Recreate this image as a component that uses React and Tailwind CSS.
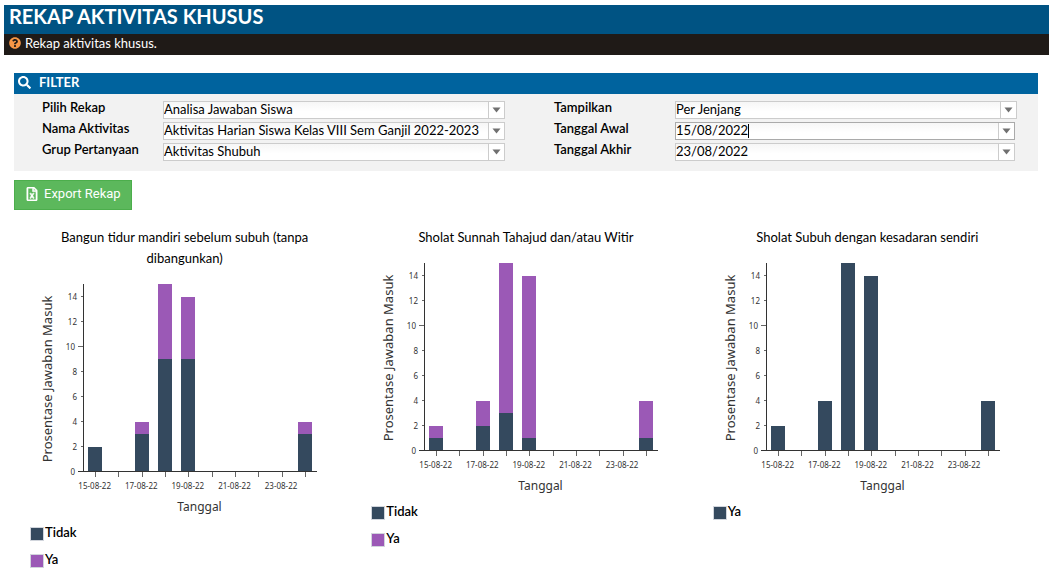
import React, { useState } from 'react';
import { FaQuestionCircle, FaRegFileExcel, FaSearch } from 'react-icons/fa';

const COLORS = { Tidak: '#34495e', Ya: '#9b59b6' };

const DATES = [
    '15-08-22', '16-08-22', '17-08-22', '18-08-22', '19-08-22',
    '20-08-22', '21-08-22', '22-08-22', '23-08-22', '24-08-22',
];

const CHARTS = [
    {
        title: 'Bangun tidur mandiri sebelum subuh (tanpa dibangunkan)',
        series: [
            { name: 'Tidak', values: [2, 0, 3, 9, 9, 0, 0, 0, 0, 3] },
            { name: 'Ya', values: [0, 0, 1, 6, 5, 0, 0, 0, 0, 1] },
        ],
    },
    {
        title: 'Sholat Sunnah Tahajud dan/atau Witir',
        series: [
            { name: 'Tidak', values: [1, 0, 2, 3, 1, 0, 0, 0, 0, 1] },
            { name: 'Ya', values: [1, 0, 2, 12, 13, 0, 0, 0, 0, 3] },
        ],
    },
    {
        title: 'Sholat Subuh dengan kesadaran sendiri',
        // only one answer came in, it takes the first color
        series: [{ name: 'Ya', color: '#34495e', values: [2, 0, 4, 15, 14, 0, 0, 0, 0, 4] }],
    },
];

// Plot area inside the svg
const LEFT = 55;
const BOTTOM = 203;
const PLOT_WIDTH = 233;
const PLOT_HEIGHT = 188;
const MAX = 15;

function StackedBarChart({ series }) {
    const band = PLOT_WIDTH / DATES.length;
    const y = (value) => Math.round(BOTTOM - (value / MAX) * PLOT_HEIGHT);

    return (
        <svg width="300" height="250" className="block font-['Noto_Sans',sans-serif]" fill="#333">
            {/* Bars */}
            {DATES.map((date, i) => {
                let total = 0;
                return series.map((s) => {
                    const from = total;
                    total += s.values[i];
                    if (!s.values[i]) return null;
                    return (
                        <rect
                            key={date + s.name}
                            x={Math.round(LEFT + band * i + 4)}
                            y={y(total)}
                            width="14"
                            height={y(from) - y(total)}
                            fill={s.color || COLORS[s.name]}
                            shapeRendering="crispEdges"
                        />
                    );
                });
            })}

            {/* Axes */}
            <g fill="none" stroke="#333" shapeRendering="crispEdges">
                <line x1={LEFT - 0.5} y1={BOTTOM - PLOT_HEIGHT} x2={LEFT - 0.5} y2={BOTTOM} />
                <line x1={LEFT - 6} y1={BOTTOM - 0.5} x2={LEFT + PLOT_WIDTH} y2={BOTTOM - 0.5} />
            </g>
            <g fill="none" stroke="#666" shapeRendering="crispEdges">
                {[2, 4, 6, 8, 10, 12, 14].map((v) => (
                    <line key={v} x1={LEFT - (v % 10 ? 3 : 6)} y1={y(v) - 0.5} x2={LEFT - 1} y2={y(v) - 0.5} />
                ))}
                {DATES.map((date, i) => {
                    const x = Math.floor(LEFT + band * (i + 0.5)) + 0.5;
                    return <line key={date} x1={x} y1={BOTTOM} x2={x} y2={BOTTOM + 5} />;
                })}
            </g>

            {/* Labels */}
            <g className="text-[8px]">
                {[0, 2, 4, 6, 8, 10, 12, 14].map((v) => (
                    <text key={v} x={LEFT - (v % 10 ? 7 : 9)} y={y(v) + 3} textAnchor="end">{v}</text>
                ))}
                {DATES.map((date, i) => i % 2 === 0 && (
                    <text key={date} x={LEFT + band * (i + 0.5) - 1} y={BOTTOM + 17} textAnchor="middle">{date}</text>
                ))}
            </g>
            <text x={LEFT + PLOT_WIDTH / 2 - 1} y={BOTTOM + 39} textAnchor="middle" className="text-[12px]">Tanggal</text>
            <text transform={`translate(23 ${BOTTOM - 93}) rotate(-90)`} textAnchor="middle" className="text-[13px]">
                Prosentase Jawaban Masuk
            </text>
        </svg>
    );
}

function ChartCard({ title, series }) {
    return (
        <article className="px-[15px]">
            <h2 className="text-center text-[13px] leading-[21px]">{title}</h2>
            <StackedBarChart series={series} />
            <ul className="pl-px text-[13px] font-semibold">
                {series.map((s) => (
                    <li key={s.name} className="flex h-[27px] items-center">
                        <span
                            className="mt-[2px] mr-px h-[14px] w-[14px] border border-gray-300"
                            style={{ backgroundColor: s.color || COLORS[s.name] }}
                        />
                        {s.name}
                    </li>
                ))}
            </ul>
        </article>
    );
}

function Arrow() {
    return (
        <svg width="9" height="6" viewBox="0 0 9 6" fill="#707070">
            <path d="M0.5 0.5h8L4.5 5.5z" />
        </svg>
    );
}

function Field({ id, label, children }) {
    return (
        <div className="flex h-[21px]">
            <label htmlFor={id} className="w-[121px] shrink-0 font-semibold leading-[21px]">{label}</label>
            {children}
        </div>
    );
}

function SelectField({ id, label, value }) {
    return (
        <Field id={id} label={label}>
            <div className="relative mt-1 h-[18px] flex-1">
                <select
                    id={id}
                    className="block h-full w-full appearance-none border border-[#ccc] bg-linear-to-b from-[#f6f6f6] to-white to-60% pb-px leading-[15px] outline-none"
                >
                    <option>{value}</option>
                </select>
                <span className="pointer-events-none absolute inset-y-px right-px flex w-4 items-center justify-center border-l border-[#ccc] bg-white">
                    <Arrow />
                </span>
            </div>
        </Field>
    );
}

function DateField({ id, label, initial, active }) {
    const [value, setValue] = useState(initial);

    return (
        <Field id={id} label={label}>
            <div className={`relative mt-1 mr-[2px] flex h-[18px] flex-1 border bg-white ${active ? 'border-[#aaa]' : 'border-[#ccc]'}`}>
                <input
                    id={id}
                    type="text"
                    value={value}
                    onChange={(e) => setValue(e.target.value)}
                    className="min-w-0 flex-1 bg-linear-to-b from-[#f6f6f6] to-white to-60% pb-px leading-[15px] outline-none"
                />
                {active && <span className="absolute top-px left-[72px] h-[14px] w-px bg-black" />}
                <button type="button" aria-label={`Pilih ${label}`} className="flex w-4 items-center justify-center border-l border-[#ccc]">
                    <Arrow />
                </button>
            </div>
        </Field>
    );
}

export default function App() {
    return (
        <div className="bg-white pt-[5px] pr-[6px] pb-2 pl-1 font-[Lato,sans-serif] text-[13px] text-black">
            {/* Page header */}
            <header className="text-white">
                <h1 className="h-[29px] bg-[#005383] pl-[5px] text-[20px] leading-[23px] font-bold">REKAP AKTIVITAS KHUSUS</h1>
                <p className="flex h-[21px] items-center gap-1 bg-[#1f1a17] pb-[3px] pl-[5px] leading-[18px]">
                    <FaQuestionCircle size={12} className="text-[#f79646]" />
                    Rekap aktivitas khusus.
                </p>
            </header>

            <main className="pt-[18px] pr-[11px] pl-[10px]">
                {/* Filter */}
                <section>
                    <h2 className="flex h-[21px] items-center gap-2 bg-[#00639e] pb-[2px] pl-1 font-bold text-white">
                        <FaSearch size={13} />
                        FILTER
                    </h2>
                    <form className="grid grid-cols-2 bg-[#f2f2f2] pt-[3px] pb-[11px]">
                        <div className="pr-[21px] pl-7">
                            <SelectField id="rekap" label="Pilih Rekap" value="Analisa Jawaban Siswa" />
                            <SelectField id="aktivitas" label="Nama Aktivitas" value="Aktivitas Harian Siswa Kelas VIII Sem Ganjil 2022-2023" />
                            <SelectField id="grup" label="Grup Pertanyaan" value="Aktivitas Shubuh" />
                        </div>
                        <div className="pr-[21px] pl-7">
                            <SelectField id="tampilkan" label="Tampilkan" value="Per Jenjang" />
                            <DateField id="awal" label="Tanggal Awal" initial="15/08/2022" active />
                            <DateField id="akhir" label="Tanggal Akhir" initial="23/08/2022" />
                        </div>
                    </form>
                </section>

                <button
                    type="button"
                    className="mt-[9px] flex h-[30px] items-center gap-[5px] border border-[#4cae4c] bg-[#5cb85c] px-[10px] pb-[2px] font-[Roboto,sans-serif] text-[13px] text-white"
                >
                    <FaRegFileExcel size={14} stroke="currentColor" strokeWidth="16" />
                    Export Rekap
                </button>

                {/* Charts */}
                <section className="mt-[17px] grid grid-cols-3">
                    {CHARTS.map((chart) => (
                        <ChartCard key={chart.title} {...chart} />
                    ))}
                </section>
            </main>
        </div>
    );
}
